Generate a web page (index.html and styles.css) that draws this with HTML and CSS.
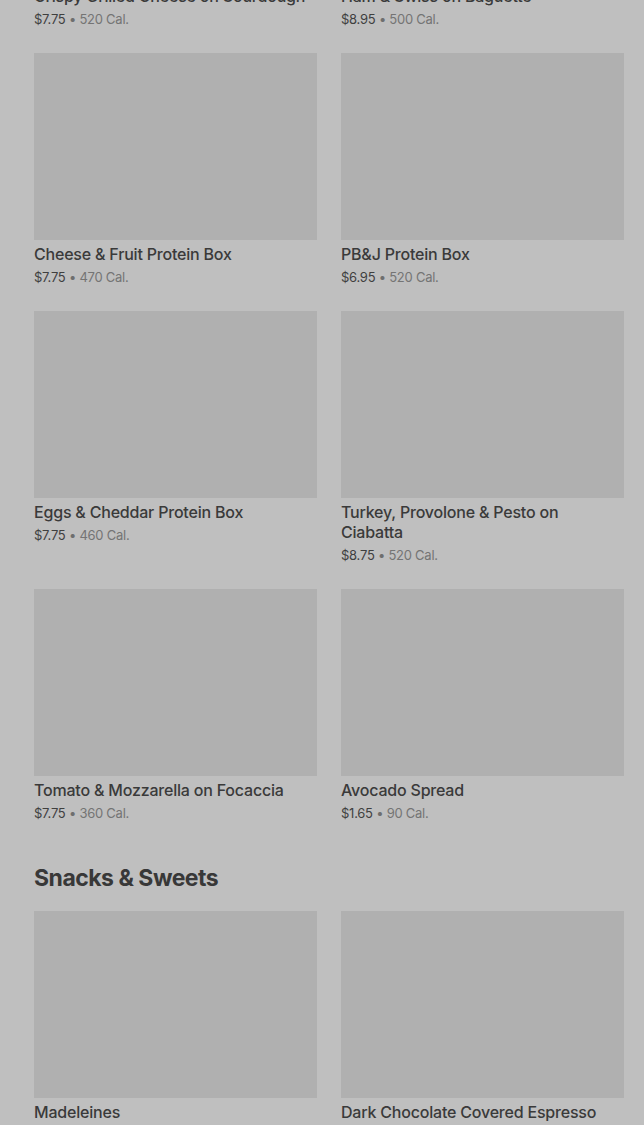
FILE: index.html
```html
<!DOCTYPE html>
<html lang="en">
<head>
<meta charset="utf-8">
<title>Menu</title>
<link rel="stylesheet" href="styles.css">
</head>
<body>
<main class="menu">
  <section class="section section-first">
    <div class="grid">
      <article class="item">
        <div class="thumb"></div>
        <h3 class="item-title">Crispy Grilled Cheese on Sourdough</h3>
        <p class="item-meta"><span class="price">$7.75</span> • <span class="cal">520 Cal.</span></p>
      </article>
      <article class="item">
        <div class="thumb"></div>
        <h3 class="item-title">Ham &amp; Swiss on Baguette</h3>
        <p class="item-meta"><span class="price">$8.95</span> • <span class="cal">500 Cal.</span></p>
      </article>
      <article class="item">
        <div class="thumb"></div>
        <h3 class="item-title">Cheese &amp; Fruit Protein Box</h3>
        <p class="item-meta"><span class="price">$7.75</span> • <span class="cal">470 Cal.</span></p>
      </article>
      <article class="item">
        <div class="thumb"></div>
        <h3 class="item-title">PB&amp;J Protein Box</h3>
        <p class="item-meta"><span class="price">$6.95</span> • <span class="cal">520 Cal.</span></p>
      </article>
      <article class="item">
        <div class="thumb"></div>
        <h3 class="item-title">Eggs &amp; Cheddar Protein Box</h3>
        <p class="item-meta"><span class="price">$7.75</span> • <span class="cal">460 Cal.</span></p>
      </article>
      <article class="item">
        <div class="thumb"></div>
        <h3 class="item-title">Turkey, Provolone &amp; Pesto on Ciabatta</h3>
        <p class="item-meta"><span class="price">$8.75</span> • <span class="cal">520 Cal.</span></p>
      </article>
      <article class="item">
        <div class="thumb"></div>
        <h3 class="item-title">Tomato &amp; Mozzarella on Focaccia</h3>
        <p class="item-meta"><span class="price">$7.75</span> • <span class="cal">360 Cal.</span></p>
      </article>
      <article class="item">
        <div class="thumb"></div>
        <h3 class="item-title">Avocado Spread</h3>
        <p class="item-meta"><span class="price">$1.65</span> • <span class="cal">90 Cal.</span></p>
      </article>
    </div>
  </section>
  <section class="section">
    <h2 class="section-title">Snacks &amp; Sweets</h2>
    <div class="grid">
      <article class="item">
        <div class="thumb"></div>
        <h3 class="item-title">Madeleines</h3>
        <p class="item-meta"><span class="price">$3.25</span> • <span class="cal">280 Cal.</span></p>
      </article>
      <article class="item">
        <div class="thumb"></div>
        <h3 class="item-title">Dark Chocolate Covered Espresso Beans</h3>
        <p class="item-meta"><span class="price">$3.95</span> • <span class="cal">200 Cal.</span></p>
      </article>
    </div>
  </section>
</main>
</body>
</html>
```
FILE: styles.css
```css
html, body {
  margin: 0;
  padding: 0;
  background: #bfbfbf;
  overflow: hidden;
}
body {
  font-family: "Inter", "Roboto", "Liberation Sans", sans-serif;
  color: #3a3a3a;
}
.menu {
  padding: 0 20px 0 34px;
  margin-top: -205px;
}
.grid {
  display: grid;
  grid-template-columns: 283px 283px;
  column-gap: 24px;
  row-gap: 24px;
}
.item {
  display: flex;
  flex-direction: column;
}
.thumb {
  height: 187px;
  background: #b0b0b0;
}
.item-title {
  margin: 4px 0 0;
  font-size: 16px;
  line-height: 20px;
  font-weight: 500;
  letter-spacing: -0.2px;
  color: #3a3a3a;
}
.item-meta {
  margin: 3px 0 0;
  font-size: 13px;
  line-height: 20px;
  letter-spacing: -0.25px;
  color: #6e6e6e;
}
.price {
  color: #3f3f3f;
}
.cal {
  color: #747474;
}
.section-title {
  margin: 39px 0 17px;
  font-size: 23px;
  line-height: 32px;
  font-weight: 700;
  color: #383838;
  letter-spacing: -0.5px;
}
```
